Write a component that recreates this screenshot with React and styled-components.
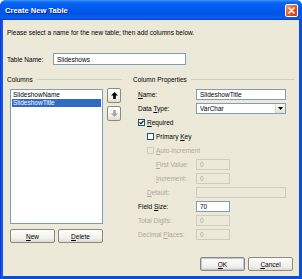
import React from "react";
import styled, { createGlobalStyle } from "styled-components";

const GlobalStyle = createGlobalStyle`
  html, body {
    margin: 0;
    padding: 0;
    background: #fff;
  }
  body {
    font-family: Tahoma, "Liberation Sans", Arial, sans-serif;
    font-size: 6.5px;
    color: #000;
  }
`;

const Window = styled.div`
  width: 302px;
  height: 279px;
  box-sizing: border-box;
  display: flex;
  flex-direction: column;
  background: linear-gradient(to right, #0831d9, #1c62ea 2px, #0a4fd8 3px);
  border-radius: 6px 6px 0 0;
  overflow: hidden;
`;

const TitleBar = styled.div`
  height: 20px;
  flex-shrink: 0;
  display: flex;
  align-items: center;
  justify-content: space-between;
  padding: 0 4px 0 5px;
  background: linear-gradient(
    to bottom,
    #3d95ff 0%,
    #0a66f5 12%,
    #0058ee 45%,
    #0054e3 70%,
    #0a5ff0 90%,
    #003dd7 100%
  );
  color: #fff;
  font-weight: bold;
  font-size: 7.6px;
  text-shadow: 1px 1px 0 #0a1e8a;
`;

const CloseButton = styled.div`
  width: 11px;
  height: 11px;
  border: 1px solid #fff;
  border-radius: 2px;
  background: linear-gradient(135deg, #f29a7c, #e35a27 50%, #c73d12);
  display: flex;
  align-items: center;
  justify-content: center;
`;

const Body = styled.div`
  flex: 1;
  margin: 0 3px 3px;
  background: #ece9d8;
  display: flex;
  flex-direction: column;
  padding: 8px 4px 5px 4px;
  line-height: 9px;
`;

const Intro = styled.div`
  height: 9px;
`;

const NameRow = styled.div`
  display: flex;
  align-items: center;
  margin-top: 16px;
  height: 12px;
`;

const NameLabel = styled.div`
  width: 46px;
`;

const TextBox = styled.div`
  box-sizing: border-box;
  width: ${(p) => p.$width}px;
  height: ${(p) => p.$height || 11}px;
  border: 1px solid ${(p) => (p.$disabled ? "#cfcdc0" : "#7f9db9")};
  background: ${(p) => (p.$disabled ? "#ece9d8" : "#fff")};
  color: ${(p) => (p.$disabled ? "#aca899" : "#000")};
  padding-left: 3px;
  display: flex;
  align-items: center;
  justify-content: space-between;
  line-height: 9px;
`;

const Columns = styled.div`
  display: flex;
  margin-top: 10px;
  gap: 11px;
`;

const LeftPane = styled.div`
  width: 115px;
  display: flex;
  flex-direction: column;
`;

const RightPane = styled.div`
  flex: 1;
  display: flex;
  flex-direction: column;
`;

const GroupHeader = styled.div`
  display: flex;
  align-items: center;
  gap: 4px;
  height: 9px;
  &::after {
    content: "";
    flex: 1;
    height: 1px;
    background: #d0d0bf;
  }
`;

const ListArea = styled.div`
  display: flex;
  gap: 4px;
  margin-top: 4px;
  padding-left: 3px;
`;

const ListBox = styled.div`
  box-sizing: border-box;
  width: 93px;
  height: 135px;
  margin-top: 1px;
  border: 1px solid #7f9db9;
  background: #fff;
  padding: 1px;
`;

const ListItem = styled.div`
  height: 8px;
  line-height: 8px;
  padding-left: 1px;
  background: ${(p) => (p.$selected ? "#316ac5" : "transparent")};
  color: ${(p) => (p.$selected ? "#fff" : "#000")};
`;

const ArrowStack = styled.div`
  display: flex;
  flex-direction: column;
  gap: 3px;
`;

const Button = styled.div`
  box-sizing: border-box;
  width: ${(p) => p.$width}px;
  height: ${(p) => p.$height || 14}px;
  border: 1px solid #8c8a80;
  border-radius: 2px;
  background: linear-gradient(to bottom, #fefefd, #f0efe9 70%, #dedccf);
  box-shadow: ${(p) => (p.$default ? "inset 0 0 0 1px #b9c6e0" : "none")};
  display: flex;
  align-items: center;
  justify-content: center;
  line-height: 9px;
`;

const ButtonRow = styled.div`
  display: flex;
  gap: 3px;
  margin-top: 5px;
  padding-left: 3px;
`;

const PropRows = styled.div`
  display: flex;
  flex-direction: column;
  margin-top: 3px;
`;

const PropRow = styled.div`
  display: grid;
  grid-template-columns: 63px auto;
  align-items: center;
  height: 14px;
`;

const PropLabel = styled.div`
  padding-left: ${(p) => 5 + (p.$indent || 0)}px;
  color: ${(p) => (p.$disabled ? "#aca899" : "#000")};
`;

const CheckRow = styled.div`
  display: flex;
  align-items: center;
  gap: 2px;
  height: 14px;
  padding-left: ${(p) => 5 + (p.$indent || 0)}px;
  color: ${(p) => (p.$disabled ? "#aca899" : "#000")};
`;

const CheckBox = styled.div`
  box-sizing: border-box;
  width: 7px;
  height: 7px;
  border: 1px solid ${(p) => (p.$disabled ? "#cfcdc0" : "#1c5180")};
  background: ${(p) => (p.$disabled ? "#ece9d8" : "#fff")};
  display: flex;
  align-items: center;
  justify-content: center;
`;

const DropButton = styled.div`
  width: 9px;
  height: 9px;
  background: linear-gradient(to bottom, #fdfdfb, #e3e1d6);
  border-left: 1px solid #d8d6cb;
  display: flex;
  align-items: center;
  justify-content: center;
`;

const Footer = styled.div`
  margin-top: auto;
  display: flex;
  justify-content: flex-end;
  gap: 3px;
  padding-right: 2px;
`;

const Arrow = ({ down, color }) => (
  <svg width="7" height="7" viewBox="0 0 7 7">
    <path
      d="M3.5 0 L7 3.5 H4.8 V7 H2.2 V3.5 H0 Z"
      fill={color}
      transform={down ? "rotate(180 3.5 3.5)" : undefined}
    />
  </svg>
);

function App() {
  return (
    <>
      <GlobalStyle />
      <Window>
        <TitleBar>
          <span>Create New Table</span>
          <CloseButton>
            <svg width="7" height="7" viewBox="0 0 7 7">
              <path
                d="M1 1 L6 6 M6 1 L1 6"
                stroke="#fff"
                strokeWidth="1.6"
                strokeLinecap="round"
              />
            </svg>
          </CloseButton>
        </TitleBar>
        <Body>
          <Intro>
            Please select a name for the new table; then add columns below.
          </Intro>
          <NameRow>
            <NameLabel>Table Name:</NameLabel>
            <TextBox $width={133} $height={12}>
              Slideshows
            </TextBox>
          </NameRow>
          <Columns>
            <LeftPane>
              <GroupHeader>Columns</GroupHeader>
              <ListArea>
                <ListBox>
                  <ListItem>SlideshowName</ListItem>
                  <ListItem $selected>SlideshowTitle</ListItem>
                </ListBox>
                <ArrowStack>
                  <Button $width={14} $height={15}>
                    <Arrow color="#000" />
                  </Button>
                  <Button $width={14} $height={15}>
                    <Arrow down color="#a7a69c" />
                  </Button>
                </ArrowStack>
              </ListArea>
              <ButtonRow>
                <Button $width={45}>
                  <span>
                    <u>N</u>ew
                  </span>
                </Button>
                <Button $width={45}>
                  <span>
                    <u>D</u>elete
                  </span>
                </Button>
              </ButtonRow>
            </LeftPane>
            <RightPane>
              <GroupHeader>Column Properties</GroupHeader>
              <PropRows>
                <PropRow>
                  <PropLabel>
                    <u>N</u>ame:
                  </PropLabel>
                  <TextBox $width={90}>SlideshowTitle</TextBox>
                </PropRow>
                <PropRow>
                  <PropLabel>
                    Data <u>T</u>ype:
                  </PropLabel>
                  <TextBox $width={90}>
                    VarChar
                    <DropButton>
                      <svg width="5" height="3" viewBox="0 0 5 3">
                        <path d="M0 0 H5 L2.5 3 Z" fill="#000" />
                      </svg>
                    </DropButton>
                  </TextBox>
                </PropRow>
                <CheckRow>
                  <CheckBox>
                    <svg width="5" height="5" viewBox="0 0 5 5">
                      <path
                        d="M0.5 2.2 L2 3.8 L4.6 0.8"
                        stroke="#1e2a1e"
                        strokeWidth="1.3"
                        fill="none"
                      />
                    </svg>
                  </CheckBox>
                  <span>
                    <u>R</u>equired
                  </span>
                </CheckRow>
                <CheckRow $indent={9}>
                  <CheckBox />
                  <span>
                    Primary <u>K</u>ey
                  </span>
                </CheckRow>
                <CheckRow $indent={9} $disabled>
                  <CheckBox $disabled />
                  <span>
                    <u>A</u>uto-increment
                  </span>
                </CheckRow>
                <PropRow>
                  <PropLabel $indent={18} $disabled>
                    <u>F</u>irst Value:
                  </PropLabel>
                  <TextBox $width={34} $disabled>
                    0
                  </TextBox>
                </PropRow>
                <PropRow>
                  <PropLabel $indent={18} $disabled>
                    <u>I</u>ncrement:
                  </PropLabel>
                  <TextBox $width={34} $disabled>
                    0
                  </TextBox>
                </PropRow>
                <PropRow>
                  <PropLabel $indent={9} $disabled>
                    <u>D</u>efault:
                  </PropLabel>
                  <TextBox $width={90} $disabled />
                </PropRow>
                <PropRow>
                  <PropLabel>
                    Field <u>S</u>ize:
                  </PropLabel>
                  <TextBox $width={34}>70</TextBox>
                </PropRow>
                <PropRow>
                  <PropLabel $disabled>Total Digits:</PropLabel>
                  <TextBox $width={34} $disabled>
                    0
                  </TextBox>
                </PropRow>
                <PropRow>
                  <PropLabel $disabled>
                    Decimal <u>P</u>laces:
                  </PropLabel>
                  <TextBox $width={34} $disabled>
                    0
                  </TextBox>
                </PropRow>
              </PropRows>
            </RightPane>
          </Columns>
          <Footer>
            <Button $width={45} $default>
              <span>
                <u>O</u>K
              </span>
            </Button>
            <Button $width={45}>
              <span>
                <u>C</u>ancel
              </span>
            </Button>
          </Footer>
        </Body>
      </Window>
    </>
  );
}

export default App;
